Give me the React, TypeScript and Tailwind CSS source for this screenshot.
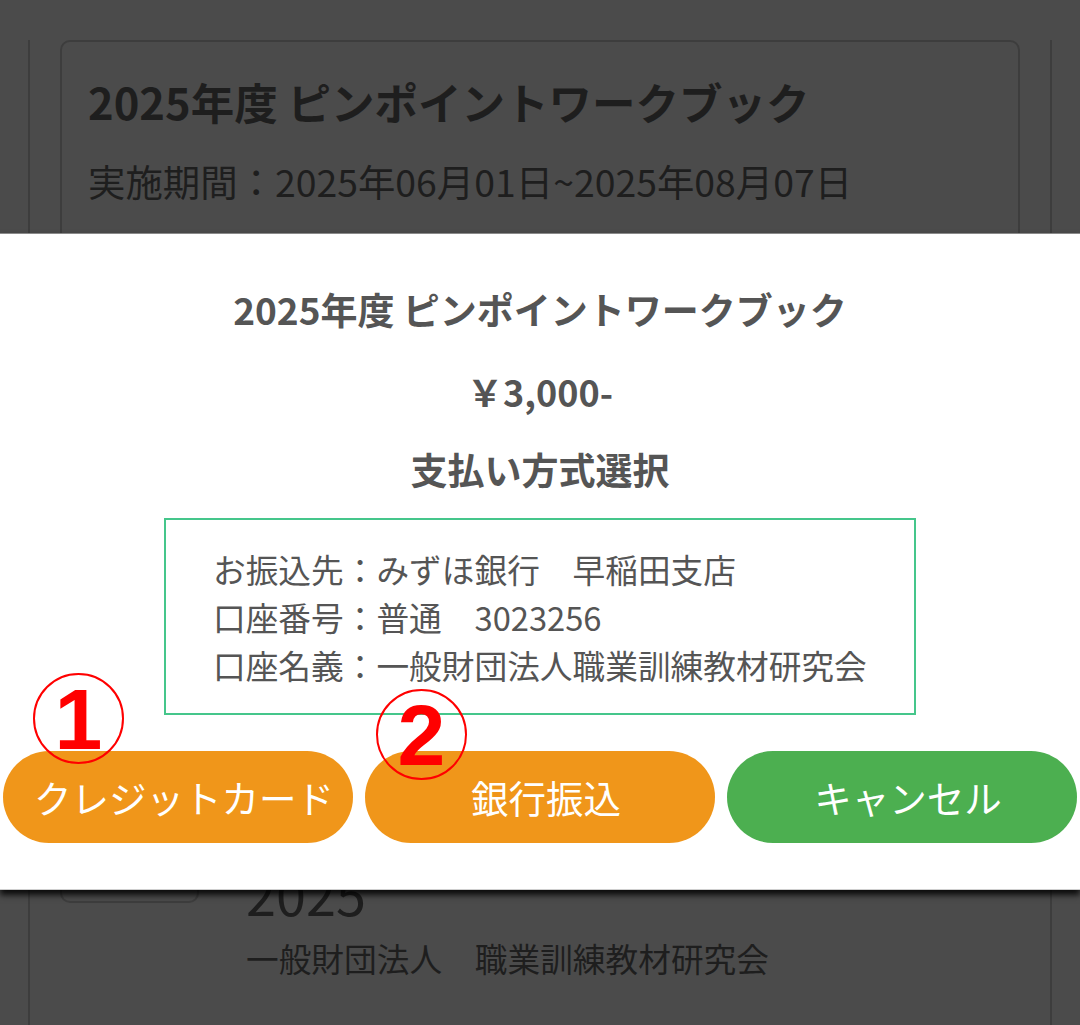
import type { ReactNode } from 'react'

// ============================================================
// 支払い方式選択ダイアログ（背面はワークブック一覧ページ）
// ============================================================

const methods = [
  { label: 'クレジットカード', color: 'bg-[#f0961a]', mark: '1' },
  { label: '銀行振込', color: 'bg-[#f0961a]', mark: '2' },
  { label: 'キャンセル', color: 'bg-[#4caf50]', mark: null },
]

const bankInfo = [
  'お振込先：みずほ銀行　早稲田支店',
  '口座番号：普通　3023256',
  '口座名義：一般財団法人職業訓練教材研究会',
]

export default function App() {
  return (
    <div className="relative h-[1025px] w-[1080px] overflow-hidden bg-[#4b4b4b] font-['Noto_Sans_CJK_JP','Noto_Sans',sans-serif]">
      <BackgroundPage />
      <PaymentDialog />
    </div>
  )
}

// ---- 背面ページ（オーバーレイで暗くなった状態） ----
function BackgroundPage() {
  return (
    <div className="mx-[28px] h-full border-x-2 border-[#3d3d3d]">
      <div className="mx-[30px] mt-[40px] h-[560px] rounded-[10px] border-2 border-[#3d3d3d] px-[26px] pt-[30px] text-[#1e1e1e]">
        <h2 className="text-[43.5px] font-bold leading-[60px]">2025年度 ピンポイントワークブック</h2>
        <p className="mt-[21px] text-[37.4px] leading-[56px]">実施期間：2025年06月01日~2025年08月07日</p>
      </div>

      <div className="mt-[160px] flex gap-[47px] pl-[30px] text-[#1e1e1e]">
        <div className="h-[143px] w-[139px] shrink-0 rounded-[10px] border-2 border-[#3d3d3d]" />
        <div className="pt-[101px]">
          <p className="text-[54px] leading-[64px]">2025</p>
          <p className="mt-[9px] text-[32.7px] leading-[48px]">一般財団法人　職業訓練教材研究会</p>
        </div>
      </div>
    </div>
  )
}

// ---- ダイアログ本体 ----
function PaymentDialog() {
  return (
    <div className="absolute inset-x-0 top-[233px] border-t border-[#8a8a8a] border-b border-b-[#cfcfcf] bg-white pt-[47px] pb-[46px] text-center text-[#555] shadow-[0_5px_6px_rgba(0,0,0,0.85)]">
      <h3 className="text-[37px] font-bold leading-[56px]">2025年度 ピンポイントワークブック</h3>
      <p className="mt-[26px] text-[36px] font-bold leading-[56px]">￥3,000-</p>
      <p className="mt-[22px] text-[37px] font-bold leading-[56px]">支払い方式選択</p>

      <div className="mx-auto mt-[21px] w-[752px] border-2 border-[#45c68b] pt-[25px] pb-[24px] pl-[47px] text-left">
        {bankInfo.map((line) => (
          <p key={line} className="text-[32.7px] leading-[48px]">
            {line}
          </p>
        ))}
      </div>

      <div className="mt-[36px] grid grid-cols-3 gap-[12px] px-[3px]">
        {methods.map((m, i) => (
          <button
            key={m.label}
            className={`relative h-[92px] rounded-full pl-[12px] ${m.color} text-[37.5px] leading-none text-white`}
          >
            {m.label}
            {m.mark && (
              <CircledMark className={i === 0 ? 'left-[30px] top-[-78px]' : 'left-[11px] top-[-62px]'}>
                {m.mark}
              </CircledMark>
            )}
          </button>
        ))}
      </div>
    </div>
  )
}

// 赤い丸数字の注釈
function CircledMark({ children, className }: { children: ReactNode; className: string }) {
  return (
    <span
      className={`absolute flex h-[91px] w-[91px] items-center justify-center rounded-full border-[2.5px] border-[#ff0000] font-['Liberation_Sans',sans-serif] text-[86px] font-bold leading-none text-[#ff0000] ${className}`}
    >
      {children}
    </span>
  )
}
